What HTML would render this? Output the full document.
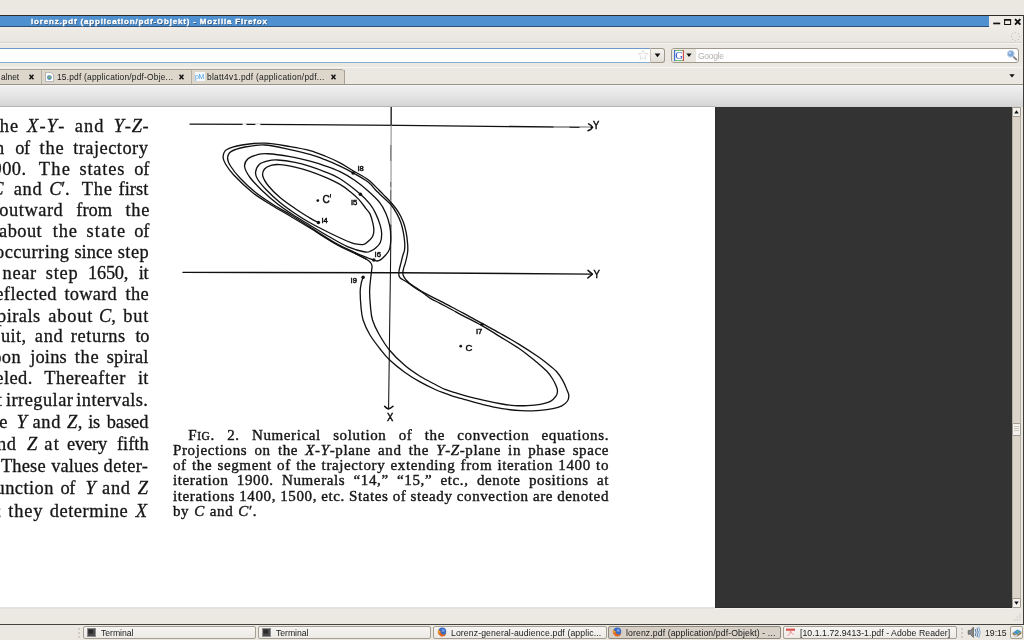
<!DOCTYPE html>
<html><head><meta charset="utf-8"><title>lorenz.pdf</title>
<style>
html,body{margin:0;padding:0;background:#ebe8e2}
body{width:1024px;height:640px;overflow:hidden;position:relative;font-family:"Liberation Sans",sans-serif}
.abs{position:absolute}
.t{white-space:nowrap;font-family:"Liberation Sans",sans-serif;color:#1a1a1a}
.tab{top:70.1px;height:14px;line-height:14px;font-size:8.4px}
.tb{top:626px;height:13px;box-sizing:border-box;background:linear-gradient(#f6f5f2,#eceae5);border:1px solid #a59e92;border-radius:2px}
.tb.act{background:#d6d0c6;border-color:#8f887c}
.tk{top:626.7px;height:13px;line-height:13px;font-size:8.7px}
.bl{white-space:nowrap;font-family:"Liberation Serif",serif;color:#161616;-webkit-text-stroke:0.3px #161616;font-size:18.4px;line-height:24px;height:24px}
.cl{white-space:nowrap;font-family:"Liberation Serif",serif;color:#161616;-webkit-text-stroke:0.4px #161616;font-size:15px;line-height:18px;height:18px}
#page{position:absolute;left:0;top:107px;width:715px;height:500px;overflow:hidden}
#all{position:absolute;left:0;top:0;width:1024px;height:640px;overflow:hidden;will-change:transform}
</style></head>
<body>
<div id="all">
<!-- ===== window chrome ===== -->
<div class="abs" style="left:0;top:0;width:1024px;height:640px;background:#ebe8e2"></div>
<!-- title bar -->
<div class="abs" style="left:0;top:15px;width:1023.7px;height:1.2px;background:#2e2c29"></div>
<div class="abs" style="left:1022.5px;top:15px;width:1.2px;height:610px;background:#3f3d3a"></div>
<div class="abs" style="left:0;top:16px;width:1022.5px;height:11px;background:#efece7"></div>
<div class="abs" style="left:0;top:16px;width:989px;height:10px;background:#4e90d0"></div>
<div class="abs" style="left:0;top:26px;width:989px;height:1px;background:#2f4f74"></div>
<div class="abs t" id="title" style="left:31px;top:16.6px;height:10px;line-height:10px;font-size:8px;font-weight:bold;color:#fff;-webkit-text-stroke:0.35px #fff;text-shadow:0.6px 0.6px 0.3px #2b4a6e;letter-spacing:0.829px">lorenz.pdf (application/pdf-Objekt) - Mozilla Firefox</div>
<!-- window buttons -->
<svg class="abs" style="left:990px;top:16px" width="32" height="11" viewBox="0 0 32 11">
  <rect x="3.2" y="6.6" width="7" height="1.7" fill="#111"/>
  <rect x="14.6" y="3.6" width="6" height="4.9" fill="none" stroke="#111" stroke-width="1"/>
  <rect x="14.1" y="3.1" width="7" height="1.6" fill="#111"/>
  <path d="M25 3.2 L30.4 8.6 M30.4 3.2 L25 8.6" stroke="#111" stroke-width="1.9" fill="none"/>
</svg>
<!-- menu/toolbar area -->
<div class="abs" style="left:0;top:27px;width:1022px;height:15px;background:linear-gradient(#efece7,#e9e5df)"></div>
<div class="abs" style="left:0;top:42px;width:1022px;height:1px;background:#d8d3ca"></div>
<div class="abs" style="left:0;top:43px;width:1022px;height:1px;background:#f6f4f1"></div>
<!-- throbber -->
<svg class="abs" style="left:1010px;top:31px" width="11" height="11" viewBox="0 0 11 11">
  <g fill="#c9c5be"><circle cx="5.5" cy="1.4" r=".7"/><circle cx="8.4" cy="2.6" r=".7"/><circle cx="9.6" cy="5.5" r=".7"/><circle cx="8.4" cy="8.4" r=".7"/><circle cx="5.5" cy="9.6" r=".7"/><circle cx="2.6" cy="8.4" r=".7"/><circle cx="1.4" cy="5.5" r=".7"/><circle cx="2.6" cy="2.6" r=".7"/></g>
</svg>
<!-- url bar -->
<div class="abs" style="left:-4px;top:48px;width:654px;height:15px;box-sizing:border-box;background:#fff;border:1px solid #6f9bcb;border-right:none;border-radius:2px 0 0 2px"></div>
<div class="abs" style="left:-4px;top:62px;width:654px;height:1px;background:#8aabd3"></div>
<svg class="abs" style="left:637px;top:49px" width="12" height="12" viewBox="0 0 12 12"><path d="M6 1.2 L7.4 4.4 L10.8 4.7 L8.2 7 L9 10.4 L6 8.6 L3 10.4 L3.8 7 L1.2 4.7 L4.6 4.4 Z" fill="#fff" stroke="#d9d9d9" stroke-width=".8"/></svg>
<div class="abs" style="left:650px;top:48px;width:15px;height:15px;box-sizing:border-box;background:linear-gradient(#f6f4f1,#e2ded7);border:1px solid #9f988c;border-left:1px solid #c9c3b9;border-radius:0 3px 3px 0"></div>
<svg class="abs" style="left:654px;top:53px" width="7" height="5" viewBox="0 0 7 5"><path d="M.6 .6 L6.4 .6 L3.5 4.2Z" fill="#111"/></svg>
<!-- search box -->
<div class="abs" style="left:671px;top:48px;width:348px;height:15px;box-sizing:border-box;background:#fff;border:1px solid #9f988c;border-radius:3px"></div>
<div class="abs" style="left:672px;top:49px;width:24px;height:13px;background:#e9e5df;border-radius:2px 0 0 2px"></div>
<svg class="abs" style="left:674px;top:50px" width="10" height="11" viewBox="0 0 10 11">
  <rect x="0" y="0" width="10" height="11" fill="#fff"/>
  <rect x="0" y="0" width="10" height="1" fill="#6fbf6f"/><rect x="0" y="10" width="10" height="1" fill="#6fbf6f"/>
  <rect x="0" y="0" width="1.2" height="11" fill="#3f6fd0"/><rect x="8.8" y="0" width="1.2" height="11" fill="#d04a4a"/>
  <text x="5" y="9" font-family="Liberation Serif, serif" font-size="10.5" text-anchor="middle" fill="#2b4fc0">G</text>
</svg>
<svg class="abs" style="left:686px;top:53px" width="6" height="5" viewBox="0 0 6 5"><path d="M.4 .6 L5.6 .6 L3 4Z" fill="#111"/></svg>
<div class="abs t" id="goog" style="left:698px;top:49.6px;height:13px;line-height:13px;font-size:8.6px;color:#b4b2ae;letter-spacing:-0.344px">Google</div>
<svg class="abs" style="left:1006px;top:49px" width="12" height="12" viewBox="0 0 12 12">
  <path d="M6.6 6.8 L10.4 10.6" stroke="#7c7f86" stroke-width="1.8" stroke-linecap="round"/>
  <circle cx="4.8" cy="4.8" r="3.4" fill="#7fa8d8" stroke="#c7d6e8" stroke-width="1"/>
  <circle cx="3.9" cy="3.9" r="1.2" fill="#b9d2ee"/>
</svg>
<!-- tab strip -->
<div class="abs" style="left:0;top:67px;width:1022px;height:1px;background:#f7f5f2"></div>
<div class="abs" style="left:0;top:69px;width:344px;height:15px;background:#dcd6cb;border-top:1px solid #aaa294;box-sizing:border-box;border-radius:0 3px 0 0"></div>
<div class="abs" style="left:41px;top:70px;width:1px;height:14px;background:#b5ae9f"></div>
<div class="abs" style="left:191px;top:70px;width:1px;height:14px;background:#b5ae9f"></div>
<div class="abs" style="left:344px;top:70px;width:1px;height:14px;background:#aaa294"></div>
<div class="abs" style="left:0;top:83.6px;width:1022.5px;height:1.2px;background:#97938b"></div>
<div class="abs t tab" id="tab1" style="left:1px;letter-spacing:0.007px">alnet</div>
<div class="abs t tab" id="tab2" style="left:57px;letter-spacing:0.204px">15.pdf (application/pdf-Obje...</div>
<div class="abs t tab" id="tab3" style="left:207px;letter-spacing:0.254px">blatt4v1.pdf (application/pdf...</div>
<svg class="abs" style="left:29px;top:74px" width="5" height="6" viewBox="0 0 5 6"><path d="M.5 .8 L4.5 5.2 M4.5 .8 L.5 5.2" stroke="#111" stroke-width="1.5"/></svg>
<svg class="abs" style="left:179px;top:74px" width="5" height="6" viewBox="0 0 5 6"><path d="M.5 .8 L4.5 5.2 M4.5 .8 L.5 5.2" stroke="#111" stroke-width="1.5"/></svg>
<svg class="abs" style="left:331px;top:74px" width="5" height="6" viewBox="0 0 5 6"><path d="M.5 .8 L4.5 5.2 M4.5 .8 L.5 5.2" stroke="#111" stroke-width="1.5"/></svg>
<!-- tab icons -->
<svg class="abs" style="left:45px;top:72px" width="9" height="10" viewBox="0 0 9 10">
  <path d="M.5 .5 H6 L8.5 3 V9.5 H.5Z" fill="#fff" stroke="#a9a9a9" stroke-width=".8"/>
  <circle cx="4.4" cy="5.6" r="2.4" fill="#4c86c4"/><circle cx="4.6" cy="5.4" r="1.2" fill="#8bbf5a"/>
</svg>
<div class="abs" style="left:195px;top:72px;width:10px;height:9px;background:#f4f8fc"></div>
<div class="abs t" style="left:195px;top:72px;width:10px;height:9px;line-height:9px;font-size:7px;color:#49a0e8;letter-spacing:-.3px">pM</div>
<svg class="abs" style="left:1009px;top:74px" width="6" height="4" viewBox="0 0 6 4"><path d="M.3 .3 L5.7 .3 L3 3.6Z" fill="#111"/></svg>
<!-- pdf plugin toolbar gradient -->
<div class="abs" style="left:0;top:84.8px;width:1022.5px;height:22.4px;background:linear-gradient(#f8f8f8 0,#efefef 7%,#e4e4e4 50%,#d5d5d5 96%,#cfcfcf 100%)"></div>
<div class="abs" style="left:0;top:106.1px;width:715px;height:1.1px;background:#b4b4b4"></div>

<!-- ===== content area ===== -->
<div class="abs" style="left:0;top:107.2px;width:715px;height:499.7px;background:#fff"></div>
<div class="abs" style="left:0;top:606.9px;width:715px;height:2.2px;background:#e4e2de"></div>
<div class="abs" style="left:715px;top:107.2px;width:297px;height:500.6px;background:#333333"></div>
<div class="abs" style="left:715px;top:107.2px;width:1px;height:500.6px;background:#2d2d2d"></div>
<div class="abs" style="left:715px;top:606.5px;width:297px;height:1.3px;background:#2d2d2d"></div>
<div class="abs" style="left:715px;top:607.8px;width:297px;height:1.3px;background:#f3f1ee"></div>
<!-- scrollbar -->
<div class="abs" style="left:1012px;top:107px;width:9px;height:500px;background:#dbd4ca;border-left:1px solid #b9b1a4;border-right:1px solid #b9b1a4;box-sizing:border-box"></div>
<div class="abs" style="left:1012px;top:107px;width:9px;height:10px;background:#f3f1ed;border:1px solid #a39b8e;box-sizing:border-box;border-radius:1px"></div>
<svg class="abs" style="left:1014px;top:110px" width="5" height="4" viewBox="0 0 5 4"><path d="M2.5 .3 L4.8 3.6 L.2 3.6Z" fill="#111"/></svg>
<div class="abs" style="left:1012px;top:598px;width:9px;height:10px;background:#f3f1ed;border:1px solid #a39b8e;box-sizing:border-box;border-radius:1px"></div>
<svg class="abs" style="left:1014px;top:601px" width="5" height="4" viewBox="0 0 5 4"><path d="M.2 .4 L4.8 .4 L2.5 3.7Z" fill="#111"/></svg>
<div class="abs" style="left:1012px;top:423.3px;width:9px;height:12.4px;background:#f3f1ed;border:1px solid #a39b8e;box-sizing:border-box;border-radius:1px"></div>
<div class="abs" style="left:1014.2px;top:425.7px;width:4.6px;height:1px;background:#cbc4b9"></div>
<div class="abs" style="left:1014.2px;top:427.8px;width:4.6px;height:1px;background:#cbc4b9"></div>
<div class="abs" style="left:1014.2px;top:429.9px;width:4.6px;height:1px;background:#cbc4b9"></div>
<!-- status bar -->
<div class="abs" style="left:0;top:609.1px;width:1022.5px;height:14.9px;background:#ece9e3"></div>
<div class="abs" style="left:1012px;top:607.6px;width:10.5px;height:2px;background:#ece9e3"></div>
<svg class="abs" style="left:1012px;top:613px" width="10" height="10" viewBox="0 0 10 10"><g fill="#d5d0c7"><rect x="7" y="1" width="1.5" height="1.5"/><rect x="4.5" y="3.5" width="1.5" height="1.5"/><rect x="7" y="3.5" width="1.5" height="1.5"/><rect x="2" y="6" width="1.5" height="1.5"/><rect x="4.5" y="6" width="1.5" height="1.5"/><rect x="7" y="6" width="1.5" height="1.5"/></g></svg>
<div class="abs" style="left:0;top:623.8px;width:1023.7px;height:1px;background:#45433f"></div>
<!-- ===== taskbar ===== -->
<div class="abs" style="left:0;top:625px;width:1024px;height:15px;background:#ebe8e2"></div>
<div class="abs" style="left:78px;top:628px;width:2px;height:2px;background:#d2ccc2"></div>
<div class="abs" style="left:78px;top:632px;width:2px;height:2px;background:#d2ccc2"></div>
<div class="abs" style="left:78px;top:636px;width:2px;height:2px;background:#d2ccc2"></div>
<div class="abs tb" style="left:83px;width:173px"></div>
<div class="abs tb" style="left:258px;width:173px"></div>
<div class="abs tb" style="left:433px;width:174px"></div>
<div class="abs tb act" style="left:608px;width:173px"></div>
<div class="abs tb" style="left:783px;width:174px"></div>
<!-- terminal icons -->
<svg class="abs" style="left:87px;top:628px" width="9" height="9" viewBox="0 0 9 9"><rect x=".4" y=".4" width="8.2" height="8.2" fill="#4a4a4a" stroke="#8d8d8d" stroke-width=".8"/><rect x="1.6" y="1.6" width="4.4" height="4" fill="#2a2a2a"/></svg>
<svg class="abs" style="left:262px;top:628px" width="9" height="9" viewBox="0 0 9 9"><rect x=".4" y=".4" width="8.2" height="8.2" fill="#4a4a4a" stroke="#8d8d8d" stroke-width=".8"/><rect x="1.6" y="1.6" width="4.4" height="4" fill="#2a2a2a"/></svg>
<!-- firefox icons -->
<svg class="abs" style="left:437px;top:627px" width="10" height="10" viewBox="0 0 10 10"><circle cx="5.3" cy="4.5" r="3.9" fill="#3a6ac2"/><circle cx="6.2" cy="3.4" r="1.6" fill="#6f9be0"/><path d="M1.2 2.6 Q-.4 7.4 3.6 9.3 Q8 10.6 9.7 6 Q8.4 8 5.9 7.6 Q3.2 6.9 3.6 4.1 Q2.2 4.2 1.2 2.6Z" fill="#e4651c"/><path d="M1.2 2.6 Q.6 5.6 2.6 7.6 Q1.8 5.4 3.6 4.1 Q2.2 4.2 1.2 2.6Z" fill="#f3a733"/></svg>
<svg class="abs" style="left:612px;top:627px" width="10" height="10" viewBox="0 0 10 10"><circle cx="5.3" cy="4.5" r="3.9" fill="#3a6ac2"/><circle cx="6.2" cy="3.4" r="1.6" fill="#6f9be0"/><path d="M1.2 2.6 Q-.4 7.4 3.6 9.3 Q8 10.6 9.7 6 Q8.4 8 5.9 7.6 Q3.2 6.9 3.6 4.1 Q2.2 4.2 1.2 2.6Z" fill="#e4651c"/><path d="M1.2 2.6 Q.6 5.6 2.6 7.6 Q1.8 5.4 3.6 4.1 Q2.2 4.2 1.2 2.6Z" fill="#f3a733"/></svg>
<!-- adobe icon -->
<svg class="abs" style="left:786px;top:628px" width="9" height="9" viewBox="0 0 9 9"><rect x="0" y="0" width="9" height="9" fill="#f7ecec"/><rect x="0" y=".6" width="9" height="2.2" fill="#d9534f"/><path d="M4.4 2.5 Q4.6 6 1.6 8 M4.4 2.5 Q5 5.6 7.6 6.6" stroke="#e08a86" stroke-width=".9" fill="none"/></svg>
<div class="abs t tk" id="tk1" style="left:101px;letter-spacing:-0.061px">Terminal</div>
<div class="abs t tk" id="tk2" style="left:276px;letter-spacing:-0.061px">Terminal</div>
<div class="abs t tk" id="tk3" style="left:451px;letter-spacing:0.104px">Lorenz-general-audience.pdf (applic...</div>
<div class="abs t tk" id="tk4" style="left:626px;letter-spacing:0.099px">lorenz.pdf (application/pdf-Objekt) - ...</div>
<div class="abs t tk" id="tk5" style="left:800px;letter-spacing:0.053px">[10.1.1.72.9413-1.pdf - Adobe Reader]</div>
<!-- tray -->
<div class="abs" style="left:961px;top:628px;width:2px;height:2px;background:#d2ccc2"></div>
<div class="abs" style="left:961px;top:632px;width:2px;height:2px;background:#d2ccc2"></div>
<div class="abs" style="left:961px;top:636px;width:2px;height:2px;background:#d2ccc2"></div>
<svg class="abs" style="left:967px;top:626px" width="15" height="13" viewBox="0 0 15 13">
  <path d="M1.2 4.6 L3.4 4.6 L6.4 1.2 L6.4 11.4 L3.4 8.2 L1.2 8.2Z" fill="#8a8a8a" stroke="#4f4f4f" stroke-width=".7"/>
  <path d="M8.2 3 Q10 6.4 8.2 10" stroke="#4f7fb8" stroke-width="1" fill="none"/>
  <path d="M10 1.8 Q12.4 6.4 10 11" stroke="#4f7fb8" stroke-width="1" fill="none"/>
  <path d="M11.8 .8 Q14.6 6.4 11.8 12" stroke="#7aa3d0" stroke-width=".9" fill="none"/>
</svg>
<div class="abs t tk" id="clock" style="left:985px;letter-spacing:-0.013px">19:15</div>
<div class="abs tb" style="left:1010px;width:13px"></div>
<svg class="abs" style="left:1012px;top:628px" width="10" height="10" viewBox="0 0 10 10"><path d="M1 4.5 L5.5 1.5 L9.3 3.6 L5 6.8Z" fill="#3f8fd0"/><path d="M5 2.4 L7.4 3.8 L5.6 5Z" fill="#5fbf5f"/><path d="M.6 4.6 L5 7 L9.4 3.8 L9.4 5.4 L5 8.8 L.6 6.2Z" fill="#8a6a2f"/><ellipse cx="3.6" cy="8" rx="2.2" ry="1.3" fill="#cfcfcf"/></svg>

<!-- ===== pdf page ===== -->
<div id="page">
<svg class="abs" style="left:0;top:0" width="715" height="500" viewBox="0 107 715 500">
<g fill="none" stroke="#111" stroke-width="1.32" stroke-linecap="round" stroke-linejoin="round">
<path d="M190 124.1 L300 124.6 L400 125.4 L592 127.4" stroke-width="1.3"/>
<path d="M554 127 L569 127.15 M580 127.27 L590 127.38" stroke="#b9b9b9" stroke-width="1.3"/>
<path d="M242.6 124.35 L246.4 124.37 M255.4 124.42 L260.4 124.45" stroke="#f2f2f2" stroke-width="2" stroke-linecap="butt"/>
<path d="M588.6 123.8 Q591.6 125.4 592.6 127.4 Q591.4 129.4 588 130.8" stroke-width="1.5"/>
<path d="M183 272.4 L400 272.8 L592 274.1" stroke-width="1.4"/>
<path d="M588 270.4 L592.4 274.1 L587.8 278" stroke-width="1.5"/>
<path d="M391.2 107 L390.9 225" stroke="#9a9a9a" stroke-width="1.2"/>
<path d="M391.2 107 L391.15 125" stroke-width="1.1"/>
<path d="M390.8 145 L390.75 161 M390.7 182 L390.68 187 M390.66 190 L390.62 200" stroke="#333" stroke-width=".6" stroke-linecap="butt"/>
<path d="M390.9 225 L390.6 260 L389.75 320 L388.6 408" stroke-width="1.05"/>
<path d="M384.6 406.3 Q386.4 408.5 388.5 408.9 Q391 408.4 393 406.3" stroke-width="1.5"/>
<path d="M318.40 222.50 C317.00 221.77 312.23 219.35 310.00 218.10 C307.77 216.85 307.50 216.60 305.00 215.00 C302.50 213.40 299.17 211.42 295.00 208.50 C290.83 205.58 284.42 201.25 280.00 197.50 C275.58 193.75 271.37 189.58 268.50 186.00 C265.63 182.42 263.47 178.83 262.80 176.00 C262.13 173.17 263.13 170.77 264.50 169.00 C265.87 167.23 268.42 166.13 271.00 165.40 C273.58 164.67 276.00 164.30 280.00 164.60 C284.00 164.90 290.00 166.08 295.00 167.20 C300.00 168.32 305.00 169.63 310.00 171.30 C315.00 172.97 320.00 175.02 325.00 177.20 C330.00 179.38 335.83 182.02 340.00 184.40 C344.17 186.78 346.88 189.00 350.00 191.50 C353.12 194.00 356.08 196.55 358.75 199.40 C361.42 202.25 364.12 206.18 366.00 208.60 C367.88 211.02 368.87 211.53 370.00 213.90 C371.13 216.27 372.15 220.07 372.80 222.80 C373.45 225.53 373.90 228.12 373.90 230.30 C373.90 232.48 373.45 234.33 372.80 235.90 C372.15 237.47 371.51 238.28 370.00 239.70 C368.49 241.12 366.25 243.72 363.75 244.40 C361.25 245.08 357.71 244.33 355.00 243.80 C352.29 243.28 351.88 243.13 347.50 241.25 C343.12 239.37 335.00 235.57 328.75 232.50 C322.50 229.43 315.62 225.97 310.00 222.80 C304.38 219.63 300.00 216.88 295.00 213.50 C290.00 210.12 284.83 206.50 280.00 202.50 C275.17 198.50 269.75 193.42 266.00 189.50 C262.25 185.58 259.23 181.93 257.50 179.00 C255.77 176.07 255.27 174.37 255.60 171.90 C255.93 169.43 257.43 166.05 259.50 164.20 C261.57 162.35 265.00 161.50 268.00 160.80 C271.00 160.10 273.00 159.75 277.50 160.00 C282.00 160.25 289.58 161.25 295.00 162.30 C300.42 163.35 305.00 164.72 310.00 166.30 C315.00 167.88 320.00 169.73 325.00 171.80 C330.00 173.88 334.09 175.02 340.00 178.75 C345.91 182.48 355.45 189.97 360.45 194.20 C365.45 198.42 367.48 200.90 370.00 204.10 C372.52 207.30 373.88 209.82 375.60 213.40 C377.32 216.98 379.28 222.15 380.30 225.60 C381.32 229.05 381.70 231.28 381.70 234.10 C381.70 236.92 381.32 240.17 380.30 242.50 C379.28 244.83 377.07 246.75 375.60 248.10 C374.13 249.45 373.27 249.95 371.50 250.60 C369.73 251.25 369.00 252.67 365.00 252.00 C361.00 251.33 353.54 249.18 347.50 246.60 C341.46 244.02 335.00 240.07 328.75 236.50 C322.50 232.93 315.96 228.82 310.00 225.20 C304.04 221.58 298.50 218.42 293.00 214.80 C287.50 211.18 282.17 207.55 277.00 203.50 C271.83 199.45 266.50 194.83 262.00 190.50 C257.50 186.17 252.90 181.50 250.00 177.50 C247.10 173.50 244.93 169.62 244.60 166.50 C244.27 163.38 245.93 160.75 248.00 158.80 C250.07 156.85 253.75 155.64 257.00 154.80 C260.25 153.96 262.00 153.45 267.50 153.75 C273.00 154.05 282.92 155.36 290.00 156.60 C297.08 157.84 304.17 159.67 310.00 161.20 C315.83 162.73 320.00 164.05 325.00 165.80 C330.00 167.55 335.00 169.25 340.00 171.70 C345.00 174.15 350.32 177.28 355.00 180.50 C359.68 183.72 364.03 187.38 368.10 191.00 C372.17 194.62 376.43 198.47 379.40 202.20 C382.37 205.93 384.18 209.50 385.90 213.40 C387.62 217.30 388.88 221.68 389.70 225.60 C390.52 229.52 390.72 233.46 390.80 236.90 C390.88 240.34 390.60 243.82 390.20 246.25 C389.80 248.68 389.27 249.91 388.40 251.50 C387.53 253.09 386.27 254.45 385.00 255.80 C383.73 257.15 382.13 258.73 380.80 259.60 C379.47 260.47 378.18 260.93 377.00 261.00 C375.82 261.07 375.25 260.50 373.75 260.00 C372.25 259.50 371.12 259.25 368.00 258.00 C364.88 256.75 360.50 255.03 355.00 252.50 C349.50 249.97 342.50 247.05 335.00 242.80 C327.50 238.55 314.17 229.63 310.00 227.00"/>
<path d="M310.00 227.00 C306.83 225.00 297.17 218.75 291.00 215.00 C284.83 211.25 279.00 208.33 273.00 204.50 C267.00 200.67 260.50 196.42 255.00 192.00 C249.50 187.58 244.08 182.33 240.00 178.00 C235.92 173.67 232.57 169.32 230.50 166.00 C228.43 162.68 227.52 160.50 227.60 158.10 C227.68 155.70 228.10 153.45 231.00 151.60 C233.90 149.75 239.33 148.10 245.00 147.00 C250.67 145.90 257.50 144.57 265.00 145.00 C272.50 145.43 282.50 148.03 290.00 149.60 C297.50 151.17 304.17 152.72 310.00 154.40 C315.83 156.08 320.00 157.75 325.00 159.70 C330.00 161.65 335.32 163.90 340.00 166.10 C344.68 168.30 348.42 170.25 353.10 172.90 C357.78 175.55 364.35 179.15 368.10 182.00 C371.85 184.85 372.78 187.17 375.60 190.00 C378.42 192.83 382.47 196.58 385.00 199.00 C387.53 201.42 388.85 202.10 390.80 204.50 C392.75 206.90 395.02 210.35 396.70 213.40 C398.38 216.45 399.80 219.67 400.90 222.80 C402.00 225.93 402.67 228.92 403.30 232.20 C403.93 235.48 404.50 239.53 404.70 242.50 C404.90 245.47 404.82 247.83 404.50 250.00 C404.18 252.17 403.40 253.32 402.80 255.50 C402.20 257.68 401.48 260.77 400.90 263.10 C400.32 265.43 399.65 267.58 399.30 269.50 C398.95 271.42 398.63 273.18 398.80 274.60 C398.97 276.02 399.17 276.88 400.30 278.00 C401.43 279.12 403.78 280.10 405.60 281.30 C407.43 282.50 409.06 283.72 411.25 285.20 C413.44 286.68 416.67 288.82 418.75 290.20 C420.83 291.58 421.88 292.18 423.75 293.50 C425.62 294.82 427.29 296.45 430.00 298.10 C432.71 299.75 436.25 301.42 440.00 303.40 C443.75 305.38 448.96 308.10 452.50 310.00 C456.04 311.90 456.33 312.20 461.25 314.80 C466.17 317.40 475.54 321.97 482.00 325.60 C488.46 329.23 493.88 332.82 500.00 336.60 C506.12 340.38 514.07 345.18 518.75 348.30 C523.43 351.42 524.98 352.88 528.10 355.30 C531.23 357.72 534.37 360.13 537.50 362.80 C540.63 365.47 544.40 368.64 546.90 371.30 C549.40 373.96 550.93 376.26 552.50 378.75 C554.07 381.24 555.47 384.21 556.30 386.25 C557.13 388.29 557.53 389.39 557.50 391.00 C557.47 392.61 557.28 394.17 556.10 395.90 C554.92 397.63 553.05 400.00 550.40 401.40 C547.75 402.80 544.02 403.60 540.20 404.30 C536.38 405.00 531.73 405.38 527.50 405.60 C523.27 405.82 519.03 405.87 514.80 405.60 C510.57 405.33 507.38 404.92 502.10 404.00 C496.82 403.08 489.45 401.55 483.10 400.10 C476.75 398.65 468.68 396.55 464.00 395.30 C459.32 394.05 458.17 393.58 455.00 392.60 C451.83 391.62 448.12 390.67 445.00 389.40 C441.88 388.13 440.42 387.19 436.25 385.00 C432.08 382.81 425.21 379.48 420.00 376.25 C414.79 373.02 410.10 369.98 405.00 365.60 C399.90 361.23 393.77 355.31 389.40 350.00 C385.02 344.69 381.57 338.75 378.75 333.75 C375.93 328.75 373.88 324.48 372.50 320.00 C371.12 315.52 370.98 311.69 370.50 306.90 C370.02 302.11 369.58 295.90 369.60 291.25 C369.62 286.60 370.27 282.46 370.60 279.00 C370.93 275.54 371.37 272.67 371.60 270.50 C371.83 268.33 372.17 267.32 372.00 266.00 C371.83 264.68 371.60 263.77 370.60 262.60 C369.60 261.43 368.60 260.53 366.00 259.00 C363.40 257.47 356.83 254.33 355.00 253.40"/>
<path d="M366.00 259.20 C364.17 258.23 360.17 256.00 355.00 253.40 C349.83 250.80 342.50 247.83 335.00 243.60 C327.50 239.37 317.50 232.60 310.00 228.00 C302.50 223.40 296.46 219.83 290.00 216.00 C283.54 212.17 277.50 208.92 271.25 205.00 C265.00 201.08 258.75 197.50 252.50 192.50 C246.25 187.50 238.25 179.75 233.75 175.00 C229.25 170.25 227.28 167.02 225.50 164.00 C223.72 160.98 222.93 159.27 223.10 156.90 C223.27 154.53 223.35 151.78 226.50 149.80 C229.65 147.82 235.58 146.12 242.00 145.00 C248.42 143.88 257.00 142.83 265.00 143.10 C273.00 143.37 282.50 145.35 290.00 146.60 C297.50 147.85 304.17 149.03 310.00 150.60 C315.83 152.17 320.00 153.97 325.00 156.00 C330.00 158.03 335.32 160.33 340.00 162.80 C344.68 165.27 348.42 167.98 353.10 170.80 C357.78 173.62 363.80 176.50 368.10 179.70 C372.40 182.90 376.08 187.25 378.90 190.00 C381.72 192.75 383.02 194.17 385.00 196.20 C386.98 198.23 388.62 199.63 390.80 202.20 C392.98 204.77 396.02 208.32 398.10 211.60 C400.18 214.88 401.97 218.47 403.30 221.90 C404.63 225.33 405.40 228.77 406.10 232.20 C406.80 235.63 407.22 239.53 407.50 242.50 C407.78 245.47 407.85 247.92 407.80 250.00 C407.75 252.08 407.62 252.82 407.20 255.00 C406.78 257.18 405.88 260.97 405.30 263.10 C404.73 265.23 404.17 266.20 403.75 267.80 C403.33 269.40 402.86 271.37 402.80 272.70 C402.74 274.03 402.93 274.70 403.40 275.80 C403.87 276.90 404.82 278.28 405.60 279.30 C406.38 280.32 407.16 281.03 408.10 281.90 C409.04 282.77 409.48 283.23 411.25 284.50 C413.02 285.77 416.67 288.15 418.75 289.50 C420.83 290.85 421.88 291.53 423.75 292.60 C425.62 293.67 427.29 294.52 430.00 295.90 C432.71 297.28 436.25 298.97 440.00 300.90 C443.75 302.83 448.54 305.42 452.50 307.50 C456.46 309.58 458.83 310.75 463.75 313.40 C468.67 316.05 475.96 320.08 482.00 323.40 C488.04 326.72 493.88 329.85 500.00 333.30 C506.12 336.75 512.50 340.28 518.75 344.10 C525.00 347.93 532.81 353.05 537.50 356.25 C542.19 359.45 543.77 360.79 546.90 363.30 C550.03 365.81 553.65 368.42 556.30 371.30 C558.95 374.18 561.02 377.48 562.80 380.60 C564.58 383.72 566.00 387.52 567.00 390.00 C568.00 392.48 568.72 393.67 568.80 395.50 C568.88 397.33 568.67 399.27 567.50 401.00 C566.33 402.73 564.23 404.62 561.80 405.90 C559.37 407.17 556.50 407.92 552.90 408.65 C549.30 409.38 545.48 409.96 540.20 410.30 C534.92 410.64 527.55 410.98 521.20 410.70 C514.85 410.42 508.45 409.67 502.10 408.65 C495.75 407.63 489.45 406.16 483.10 404.60 C476.75 403.04 468.68 400.58 464.00 399.30 C459.32 398.02 458.17 397.90 455.00 396.90 C451.83 395.90 448.12 394.45 445.00 393.30 C441.88 392.15 440.42 391.90 436.25 390.00 C432.08 388.10 425.21 384.82 420.00 381.90 C414.79 378.98 410.10 376.19 405.00 372.50 C399.90 368.81 393.57 363.71 389.40 359.75 C385.23 355.79 383.23 352.88 380.00 348.75 C376.77 344.62 372.82 339.79 370.00 335.00 C367.18 330.21 364.60 324.68 363.10 320.00 C361.60 315.32 361.48 311.69 361.00 306.90 C360.52 302.11 360.13 295.32 360.20 291.25 C360.27 287.18 360.92 284.84 361.40 282.50 C361.88 280.16 362.82 278.08 363.10 277.20"/>
</g>
<g fill="#111">
<circle cx="318.4" cy="222.5" r="1.75"/>
<circle cx="360.4" cy="194.2" r="1.75"/>
<circle cx="373.8" cy="260.0" r="1.75"/>
<circle cx="482.0" cy="324.5" r="1.75"/>
<circle cx="353.1" cy="172.9" r="1.75"/>
<circle cx="363.1" cy="277.2" r="1.75"/>
<circle cx="317.8" cy="200.6" r="1.35"/><circle cx="460.7" cy="346.2" r="1.35"/>
</g>
<g font-family="Liberation Sans, sans-serif" fill="#111" stroke="#111" stroke-width=".5" font-size="7.6">
<text x="357.5" y="171.4">I8</text>
<text x="351.0" y="204.8">I5</text>
<text x="321.4" y="222.8">I4</text>
<text x="374.6" y="257.4">I6</text>
<text x="350.6" y="283.2">I9</text>
<text x="476.0" y="333.6">I7</text>
<text x="322.4" y="203.3" font-size="10">C</text><path d="M330.6 194 L330.3 197.7" stroke="#111" stroke-width="1"/>
<text x="465.6" y="350.6" font-size="9.5">C</text>
<text x="593.1" y="129.4" font-size="10.4" textLength="6.3" lengthAdjust="spacingAndGlyphs">Y</text>
<text x="593.5" y="277.6" font-size="10.4" textLength="6.4" lengthAdjust="spacingAndGlyphs">Y</text>
<text x="386.9" y="420.9" font-size="10.6" textLength="6.3" lengthAdjust="spacingAndGlyphs">X</text>
</g></svg>
<div class="abs bl" style="left:-0.30px;top:7.40px;letter-spacing:1.209px">he</div>
<div class="abs bl" style="left:27.04px;top:7.40px;letter-spacing:1.200px"><i>X</i>-<i>Y</i>-</div>
<div class="abs bl" style="left:74.70px;top:7.40px;letter-spacing:1.081px">and</div>
<div class="abs bl" style="left:113.76px;top:7.40px;letter-spacing:0.752px"><i>Y</i>-<i>Z</i>-</div>
<div class="abs bl" style="left:-5.00px;top:28.50px;letter-spacing:0.450px">n</div>
<div class="abs bl" style="left:15.14px;top:28.50px;letter-spacing:-0.300px">of</div>
<div class="abs bl" style="left:39.54px;top:28.50px;letter-spacing:0.784px">the</div>
<div class="abs bl" style="left:73.14px;top:28.50px;letter-spacing:0.483px">trajectory</div>
<div class="abs bl" style="left:-7.46px;top:49.70px;letter-spacing:0.450px">900.</div>
<div class="abs bl" style="left:38.76px;top:49.70px;letter-spacing:1.238px">The</div>
<div class="abs bl" style="left:79.39px;top:49.70px;letter-spacing:0.854px">states</div>
<div class="abs bl" style="left:134.28px;top:49.70px;letter-spacing:-0.300px">of</div>
<div class="abs bl" style="left:-8.86px;top:70.40px;letter-spacing:0.450px"><i>C</i></div>
<div class="abs bl" style="left:13.76px;top:70.40px;letter-spacing:0.691px">and</div>
<div class="abs bl" style="left:49.22px;top:70.40px;letter-spacing:-0.300px"><i>C</i>′.</div>
<div class="abs bl" style="left:81.73px;top:70.40px;letter-spacing:0.847px">The</div>
<div class="abs bl" style="left:118.45px;top:70.40px;letter-spacing:0.088px">first</div>
<div class="abs bl" style="left:-0.77px;top:91.20px;letter-spacing:0.551px">outward</div>
<div class="abs bl" style="left:76.26px;top:91.20px;letter-spacing:0.002px">from</div>
<div class="abs bl" style="left:125.48px;top:91.20px;letter-spacing:0.784px">the</div>
<div class="abs bl" style="left:-0.95px;top:112.20px;letter-spacing:0.450px">about</div>
<div class="abs bl" style="left:52.83px;top:112.20px;letter-spacing:0.784px">the</div>
<div class="abs bl" style="left:86.42px;top:112.20px;letter-spacing:1.295px">state</div>
<div class="abs bl" style="left:134.28px;top:112.20px;letter-spacing:-0.300px">of</div>
<div class="abs bl" style="left:-5.02px;top:133.30px;letter-spacing:0.450px">occurring</div>
<div class="abs bl" style="left:74.39px;top:133.30px;letter-spacing:0.076px">since</div>
<div class="abs bl" style="left:117.67px;top:133.30px;letter-spacing:0.481px">step</div>
<div class="abs bl" style="left:2.51px;top:154.40px;letter-spacing:0.690px">near</div>
<div class="abs bl" style="left:45.79px;top:154.40px;letter-spacing:0.742px">step</div>
<div class="abs bl" style="left:87.98px;top:154.40px;letter-spacing:-0.237px">1650,</div>
<div class="abs bl" style="left:138.63px;top:154.40px;letter-spacing:-0.300px">it</div>
<div class="abs bl" style="left:-4.80px;top:175.30px;letter-spacing:0.450px">eflected</div>
<div class="abs bl" style="left:64.54px;top:175.30px;letter-spacing:0.217px">toward</div>
<div class="abs bl" style="left:125.48px;top:175.30px;letter-spacing:0.394px">the</div>
<div class="abs bl" style="left:-2.97px;top:196.60px;letter-spacing:0.450px">pirals</div>
<div class="abs bl" style="left:48.14px;top:196.60px;letter-spacing:0.873px">about</div>
<div class="abs bl" style="left:98.92px;top:196.60px;letter-spacing:0.116px"><i>C</i>,</div>
<div class="abs bl" style="left:123.14px;top:196.60px;letter-spacing:0.886px">but</div>
<div class="abs bl" style="left:0.95px;top:217.40px;letter-spacing:0.372px">uit,</div>
<div class="abs bl" style="left:34.86px;top:217.40px;letter-spacing:0.691px">and</div>
<div class="abs bl" style="left:70.79px;top:217.40px;letter-spacing:0.571px">returns</div>
<div class="abs bl" style="left:135.57px;top:217.40px;letter-spacing:-0.300px">to</div>
<div class="abs bl" style="left:-7.88px;top:238.40px;letter-spacing:0.450px">oon</div>
<div class="abs bl" style="left:30.17px;top:238.40px;letter-spacing:0.189px">joins</div>
<div class="abs bl" style="left:74.70px;top:238.40px;letter-spacing:0.784px">the</div>
<div class="abs bl" style="left:106.73px;top:238.40px;letter-spacing:0.167px">spiral</div>
<div class="abs bl" style="left:-4.70px;top:259.30px;letter-spacing:0.450px">eled.</div>
<div class="abs bl" style="left:44.23px;top:259.30px;letter-spacing:0.501px">Thereafter</div>
<div class="abs bl" style="left:137.98px;top:259.30px;letter-spacing:0.209px">it</div>
<div class="abs bl" style="left:-3.26px;top:280.60px;letter-spacing:0.450px">t</div>
<div class="abs bl" style="left:5.95px;top:280.60px;letter-spacing:0.462px">irregular</div>
<div class="abs bl" style="left:76.26px;top:280.60px;letter-spacing:0.417px">intervals.</div>
<div class="abs bl" style="left:-0.84px;top:302.80px;letter-spacing:0.450px">e</div>
<div class="abs bl" style="left:16.76px;top:302.80px;letter-spacing:0.000px"><i>Y</i></div>
<div class="abs bl" style="left:32.51px;top:302.80px;letter-spacing:0.691px">and</div>
<div class="abs bl" style="left:66.89px;top:302.80px;letter-spacing:0.600px"><i>Z</i>,</div>
<div class="abs bl" style="left:88.15px;top:302.80px;letter-spacing:-0.300px">is</div>
<div class="abs bl" style="left:106.73px;top:302.80px;letter-spacing:-0.045px">based</div>
<div class="abs bl" style="left:-2.92px;top:325.10px;letter-spacing:0.450px">nd</div>
<div class="abs bl" style="left:26.91px;top:325.10px;letter-spacing:0.000px"><i>Z</i></div>
<div class="abs bl" style="left:44.23px;top:325.10px;letter-spacing:1.381px">at</div>
<div class="abs bl" style="left:66.89px;top:325.10px;letter-spacing:-0.100px">every</div>
<div class="abs bl" style="left:116.89px;top:325.10px;letter-spacing:0.045px">fifth</div>
<div class="abs bl" style="left:0.95px;top:346.90px;letter-spacing:0.185px">These</div>
<div class="abs bl" style="left:51.26px;top:346.90px;letter-spacing:0.098px">values</div>
<div class="abs bl" style="left:103.61px;top:346.90px;letter-spacing:0.367px">deter-</div>
<div class="abs bl" style="left:-4.45px;top:369.20px;letter-spacing:0.450px">unction</div>
<div class="abs bl" style="left:60.45px;top:369.20px;letter-spacing:-0.300px">of</div>
<div class="abs bl" style="left:85.51px;top:369.20px;letter-spacing:0.000px"><i>Y</i></div>
<div class="abs bl" style="left:102.04px;top:369.20px;letter-spacing:0.691px">and</div>
<div class="abs bl" style="left:137.70px;top:369.20px;letter-spacing:0.000px"><i>Z</i></div>
<div class="abs bl" style="left:-3.58px;top:391.50px;letter-spacing:0.450px">;</div>
<div class="abs bl" style="left:8.29px;top:391.50px;letter-spacing:0.841px">they</div>
<div class="abs bl" style="left:49.70px;top:391.50px;letter-spacing:0.552px">determine</div>
<div class="abs bl" style="left:135.79px;top:391.50px;letter-spacing:0.000px"><i>X</i></div>
<div class="abs cl" style="left:188.20px;top:319.30px;letter-spacing:0.620px;word-spacing:7.924px"><span style="font-variant:normal">F<span style="font-size:11.5px">IG</span></span>. 2. Numerical solution of the convection equations.</div>
<div class="abs cl" style="left:173.00px;top:334.35px;letter-spacing:0.620px;word-spacing:2.816px">Projections on the <i>X</i>-<i>Y</i>-plane and the <i>Y</i>-<i>Z</i>-plane in phase space</div>
<div class="abs cl" style="left:173.00px;top:349.40px;letter-spacing:0.620px;word-spacing:0.916px">of the segment of the trajectory extending from iteration 1400 to</div>
<div class="abs cl" style="left:173.00px;top:364.45px;letter-spacing:0.620px;word-spacing:3.928px">iteration 1900. Numerals “14,” “15,” etc., denote positions at</div>
<div class="abs cl" style="left:173.00px;top:379.50px;letter-spacing:0.620px;word-spacing:-0.231px">iterations 1400, 1500, etc. States of steady convection are denoted</div>
<div class="abs cl" style="left:173.00px;top:394.55px;letter-spacing:0.620px;word-spacing:0.600px">by <i>C</i> and <i>C</i>′.</div>
</div>
</div>
</body></html>
